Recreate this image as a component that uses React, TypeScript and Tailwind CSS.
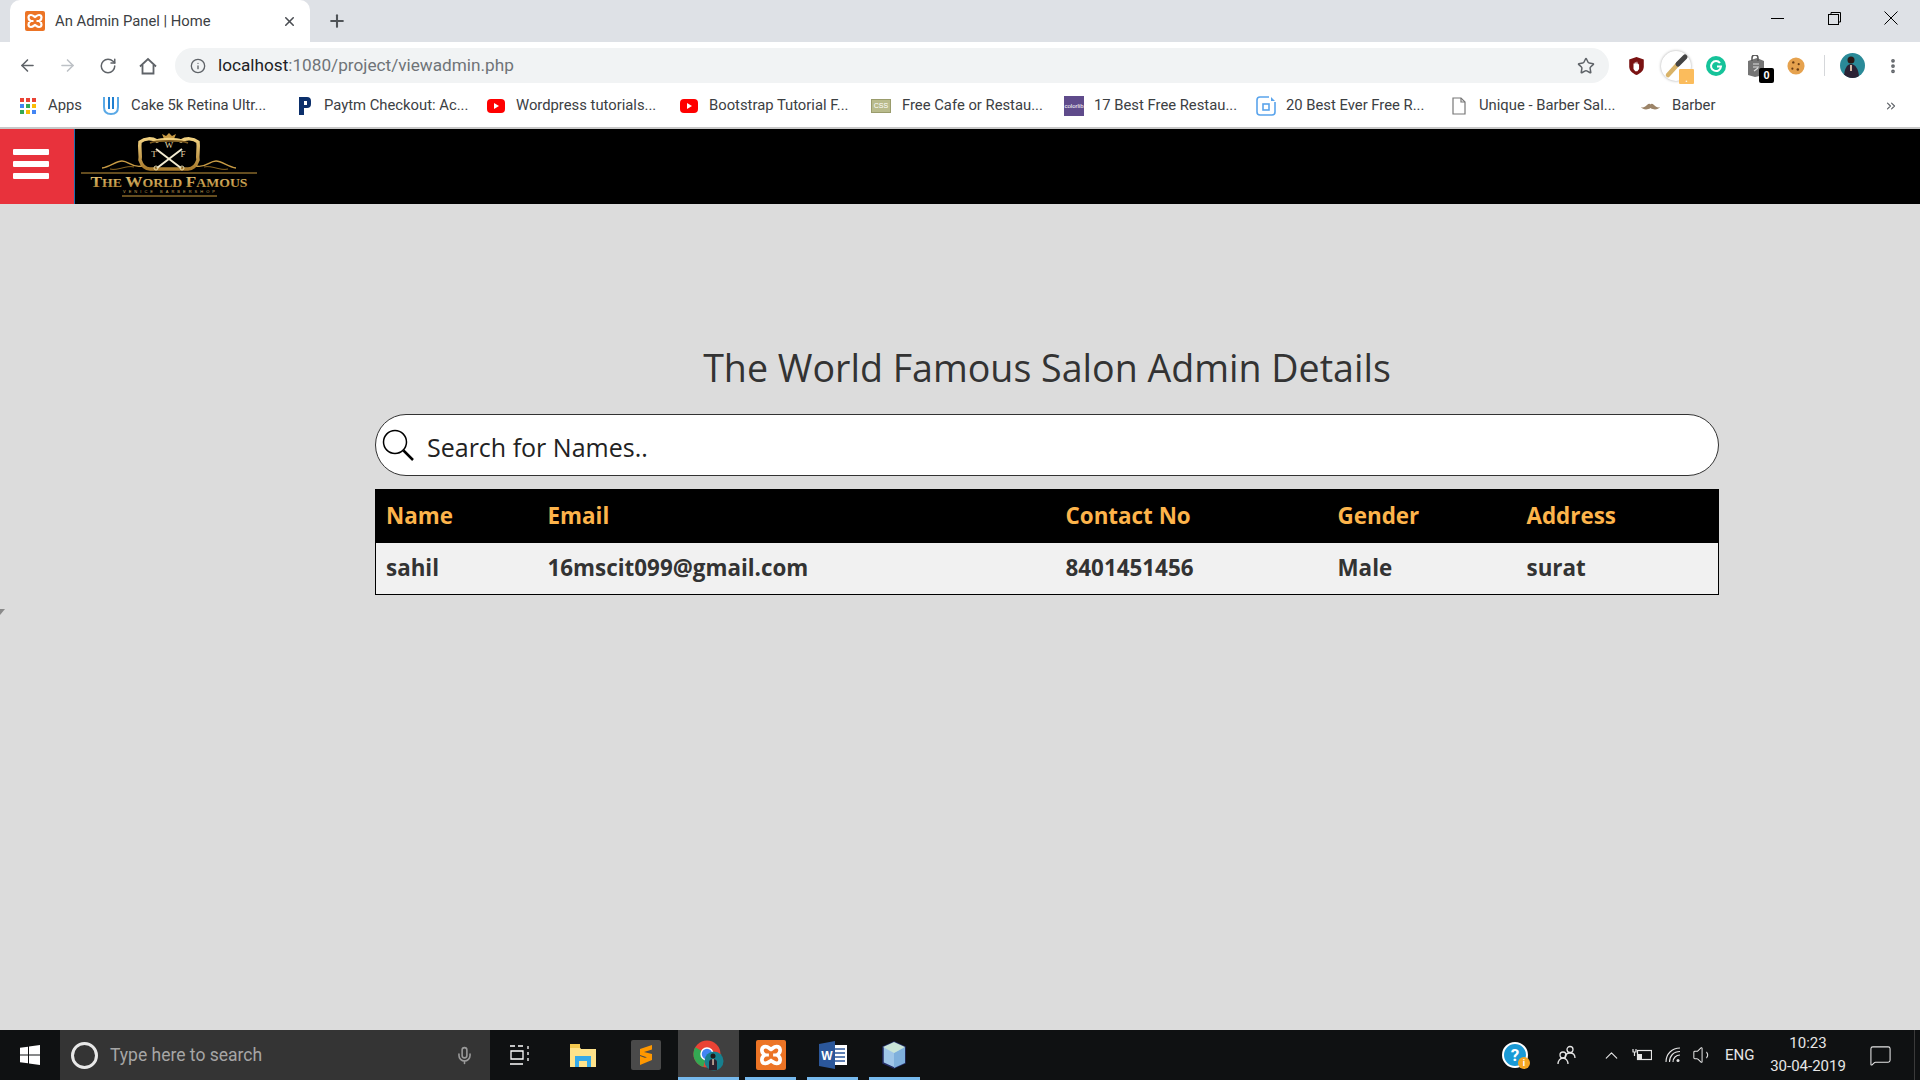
import { ArrowLeft, ArrowRight, RotateCw, Info, Star, Plus, X, MoreVertical, ChevronsRight, Mic, ChevronUp, Volume1, MessageSquare } from 'lucide-react';

const bookmarks = [
  { icon: 'cake', label: 'Cake 5k Retina Ultr...', box: 'w-[29px]', text: 'w-[167px]' },
  { icon: 'paytm', label: 'Paytm Checkout: Ac...', box: 'w-[26px]', text: 'w-[163px]' },
  { icon: 'yt', label: 'Wordpress tutorials...', box: 'w-[29px]', text: 'w-[164px]' },
  { icon: 'yt', label: 'Bootstrap Tutorial F...', box: 'w-[29px]', text: 'w-[162px]' },
  { icon: 'css', label: 'Free Cafe or Restau...', box: 'w-[31px]', text: 'w-[162px]' },
  { icon: 'colorlib', label: '17 Best Free Restau...', box: 'w-[30px]', text: 'w-[162px]' },
  { icon: 'doc', label: '20 Best Ever Free R...', box: 'w-[30px]', text: 'w-[166px]' },
  { icon: 'page', label: 'Unique - Barber Sal...', box: 'w-[27px]', text: 'w-[162px]' },
  { icon: 'barber', label: 'Barber', box: 'w-[31px]', text: 'w-[60px]' },
];

const XAMPP_PATH =
  'M6 4C8 4 9 5.500 10 6C11 5.500 12 4 14 4C17 4 17.500 8 14.500 10C17.500 12 17 16 14 16C12 16 11 14.500 10 14C9 14.500 8 16 6 16C3 16 2.500 12 5.500 10C2.500 8 3 4 6 4z';

function BookmarkIcon({ name }: { name: string }) {
  switch (name) {
    case 'cake':
      return (
        <svg width="18" height="20" viewBox="0 0 18 20">
          <path d="M2 1v10c0 4 2 7 7 7s7-3 7-7V1" fill="none" stroke="#5aa9e6" strokeWidth="2" />
          <path d="M7 1v12M11 1v12" stroke="#1f7fd0" strokeWidth="2" />
        </svg>
      );
    case 'paytm':
      return (
        <svg width="14" height="20" viewBox="0 0 14 20">
          <path d="M1 1h8a4 4 0 0 1 4 4v3a4 4 0 0 1-4 4H6v7H1z" fill="#0b2f6b" />
          <rect x="6" y="5" width="3" height="4" fill="#fff" />
        </svg>
      );
    case 'yt':
      return (
        <svg width="18" height="14" viewBox="0 0 18 14">
          <rect width="18" height="14" rx="4" fill="#f00" />
          <path d="M7 4l5 3-5 3z" fill="#fff" />
        </svg>
      );
    case 'css':
      return (
        <div className="w-5 h-[14px] bg-[#b9bb8c] border border-[#9a9c6c] flex items-center justify-center text-[7px] leading-none text-white font-['Liberation_Sans',sans-serif]">
          CSS
        </div>
      );
    case 'colorlib':
      return (
        <div className="w-5 h-5 bg-[#5f4b8b] flex items-center justify-center text-[6px] leading-none text-white font-['Liberation_Sans',sans-serif]">
          colorlib
        </div>
      );
    case 'doc':
      return (
        <svg width="20" height="20" viewBox="0 0 20 20">
          <path d="M13 1H4a3 3 0 0 0-3 3v12a3 3 0 0 0 3 3h12a3 3 0 0 0 3-3V6" fill="none" stroke="#5aa4ec" strokeWidth="1.600" />
          <path d="M15 1l4 4h-4z" fill="#5aa4ec" />
          <rect x="7" y="8" width="6" height="6" fill="none" stroke="#5aa4ec" strokeWidth="1.600" />
        </svg>
      );
    case 'page':
      return (
        <svg width="14" height="18" viewBox="0 0 14 18">
          <path d="M1 1h8l4 4v12H1z" fill="#fff" stroke="#777" strokeWidth="1.200" />
          <path d="M9 1v4h4" fill="none" stroke="#777" strokeWidth="1.200" />
        </svg>
      );
    case 'barber':
      return (
        <svg width="19" height="8" viewBox="0 0 19 8">
          <path d="M0 5c2 1 4 0 6-2 1.500-1.500 3-1.500 3.500-.5C10 1.500 11.500 1.500 13 3c2 2 4 3 6 2-1.500 2.500-6 3.500-9.500 1C6 8.500 1.500 7.500 0 5z" fill="#9c8468" />
        </svg>
      );
    default:
      return null;
  }
}

function AppsIcon() {
  const colors = ['#ea4335', '#ea4335', '#ea4335', '#4285f4', '#34a853', '#fbbc05', '#34a853', '#fbbc05', '#4285f4'];
  return (
    <div className="grid grid-cols-3 gap-[2px] w-4 h-4">
      {colors.map((c, i) => (
        <span key={i} className="w-[4px] h-[4px]" style={{ backgroundColor: c }} />
      ))}
    </div>
  );
}

function Xampp({ size }: { size: number }) {
  return (
    <svg width={size} height={size} viewBox="0 0 20 20">
      <rect width="20" height="20" rx="2" fill="#ec7425" />
      <path d={XAMPP_PATH} fill="none" stroke="#fff" strokeWidth="2.200" />
      <path d="M6 10h2.500M11.500 10H14" stroke="#fff" strokeWidth="1.800" />
    </svg>
  );
}

function Extensions() {
  return (
    <div className="flex items-center h-full ml-[7px]">
      {/* shield */}
      <div className="w-[40px] flex justify-center">
        <svg width="15" height="18" viewBox="0 0 17 21">
          <path d="M8.500 0L17 3v8c0 5-4 8-8.500 10C4 19 0 16 0 11V3z" fill="#7a1212" />
          <path d="M5 14V7.500h1.500V6h1v1.500h1V5.500h1v2h1v1h1V14l-2 2.500H7z" fill="#fff" />
        </svg>
      </div>
      {/* eyedropper */}
      <div className="w-[40px] flex justify-center relative">
        <div className="w-[30px] h-[30px] rounded-full bg-white shadow-[0_0_3px_rgba(0,0,0,0.35)] flex items-center justify-center">
          <svg width="30" height="30" viewBox="0 0 30 30">
            <path d="M7 24L17 13" stroke="#d9b368" strokeWidth="4.500" strokeLinecap="round" />
            <path d="M17 13L24 6" stroke="#444" strokeWidth="5" strokeLinecap="round" />
          </svg>
        </div>
        <div className="absolute left-[23px] top-[18px] w-[15px] h-[15px] bg-[#fbbc5c] rounded-[1px] flex items-end justify-center text-white text-[10px] leading-[12px]">.</div>
      </div>
      {/* grammarly */}
      <div className="w-[39px] flex justify-center">
        <div className="w-[20px] h-[20px] rounded-full bg-[#15c39a] flex items-center justify-center">
          <svg width="14" height="14" viewBox="0 0 14 14">
            <path d="M11 4a5 5 0 1 0 1 3.500H8" fill="none" stroke="#fff" strokeWidth="2" />
          </svg>
        </div>
      </div>
      {/* shopping bag with counter */}
      <div className="w-[39px] flex justify-center relative pl-[3px]">
        <svg width="18" height="22" viewBox="0 0 18 22">
          <path d="M1 6l9-3 7 3v14l-9 2-7-2z" fill="#757575" />
          <path d="M5 6V3a3 3 0 0 1 6 0v3" fill="none" stroke="#555" strokeWidth="1.500" />
          <path d="M6 9h6M6 12h6M7 16l4-3" stroke="#ddd" strokeWidth="1.200" />
        </svg>
        <div className="absolute left-[24px] top-[13px] w-[15px] h-[15px] bg-black rounded-[2px] text-white text-[11px] leading-[15px] text-center font-bold font-['Liberation_Sans',sans-serif]">0</div>
      </div>
      {/* cookie */}
      <div className="w-[42px] flex justify-center pl-[2px]">
        <svg width="18" height="18" viewBox="0 0 20 20">
          <circle cx="10" cy="10" r="9.500" fill="#e6a24e" />
          <circle cx="7" cy="6" r="1.300" fill="#6a3c12" />
          <circle cx="13" cy="8" r="1.200" fill="#6a3c12" />
          <circle cx="6" cy="13" r="1.200" fill="#6a3c12" />
          <circle cx="12" cy="14" r="1.400" fill="#6a3c12" />
        </svg>
      </div>
      <div className="w-px h-[21px] bg-[#d5d7da] mx-[8px]" />
      {/* profile picture */}
      <div className="ml-[7px] w-[25px] h-[25px] rounded-full overflow-hidden">
        <svg width="25" height="25" viewBox="0 0 25 25">
          <rect width="25" height="25" fill="#2a8a98" />
          <circle cx="11" cy="7" r="3.500" fill="#2a1a16" />
          <path d="M4 25c0-9 3-14 7-14s8 5 8 14z" fill="#2b2234" />
          <rect x="10" y="12" width="2" height="6" fill="#d8b9a5" />
        </svg>
      </div>
    </div>
  );
}

function ChromeBar() {
  return (
    <div className="flex flex-col">
      {/* tab strip */}
      <div className="h-[42px] bg-[#dee1e6] flex items-stretch pl-[10px]">
        <div className="w-[300px] bg-white rounded-t-[10px] flex items-center pl-[15px] pr-[13px]">
          <Xampp size={20} />
          <span className="ml-[10px] text-[14.800px] text-[#3c4043] font-['Roboto',sans-serif] flex-1 whitespace-nowrap">An Admin Panel | Home</span>
          <X className="w-[15px] h-[15px] text-[#4a4d52]" strokeWidth={2.5} />
        </div>
        <div className="ml-[17px] flex items-center">
          <Plus className="w-[20px] h-[20px] text-[#505458]" strokeWidth={2.5} />
        </div>
        <div className="ml-auto flex items-start">
          <div className="w-[57px] h-[36px] flex items-center justify-center">
            <div className="w-[13px] h-px bg-black" />
          </div>
          <div className="w-[57px] h-[36px] flex items-center justify-center">
            <svg width="13" height="13" viewBox="0 0 13 13">
              <rect x=".5" y="2.500" width="10" height="10" fill="none" stroke="#000" />
              <path d="M3 2.500V.5h9.500V10h-2" fill="none" stroke="#000" />
            </svg>
          </div>
          <div className="w-[57px] h-[36px] flex items-center justify-center pr-[2px]">
            <svg width="14" height="14" viewBox="0 0 14 14">
              <path d="M.5.5l13 13M13.500.5l-13 13" stroke="#000" />
            </svg>
          </div>
        </div>
      </div>
      {/* address row */}
      <div className="h-[47px] bg-white flex items-center pl-[18px]">
        <ArrowLeft className="w-[19px] h-[19px] text-[#5f6368]" strokeWidth={2} />
        <ArrowRight className="ml-[21px] w-[19px] h-[19px] text-[#bdc1c6]" strokeWidth={2} />
        <RotateCw className="ml-[22px] w-[18px] h-[18px] text-[#5f6368]" strokeWidth={2} />
        <svg className="ml-[22px]" width="18" height="18" viewBox="0 0 18 18" fill="none" stroke="#5f6368" strokeWidth="1.800">
          <path d="M1 9.500L9 2l8 7.500" />
          <path d="M3.500 8v8.500h11V8" />
        </svg>
        <div className="ml-[18px] w-[1434px] h-[35px] rounded-full bg-[#f1f3f4] flex items-center pl-[15px] pr-[14px]">
          <Info className="w-[16px] h-[16px] text-[#5f6368]" strokeWidth={2} />
          <span className="ml-[12px] text-[17.200px] font-['Roboto',sans-serif] text-[#202124] whitespace-nowrap">
            localhost<span className="text-[#6f7378]">:1080/project/viewadmin.php</span>
          </span>
          <Star className="ml-auto w-[18px] h-[18px] text-[#5f6368]" strokeWidth={2} />
        </div>
        <Extensions />
        <MoreVertical className="ml-[19px] w-[18px] h-[18px] text-[#5f6368]" strokeWidth={3} />
      </div>
      {/* bookmarks */}
      <div className="h-[38px] bg-white flex items-center pl-[20px] pb-[5px] text-[14.800px] text-[#3c4043] font-['Roboto',sans-serif]">
        <AppsIcon />
        <span className="ml-[12px] w-[54px]">Apps</span>
        {bookmarks.map((b) => (
          <div key={b.label} className="flex items-center">
            <div className={`${b.box} flex items-center`}>
              <BookmarkIcon name={b.icon} />
            </div>
            <span className={`${b.text} whitespace-nowrap`}>{b.label}</span>
          </div>
        ))}
        <ChevronsRight className="ml-[152px] w-[14px] h-[14px] text-[#5f6368]" strokeWidth={2} />
      </div>
      <div className="h-[2px] bg-[#c8c8c8]" />
    </div>
  );
}

function Logo() {
  return (
    <svg width="178" height="66" viewBox="0 0 178 66" className="ml-[5px] mb-[1px]">
      <defs>
        <linearGradient id="gold" x1="0" y1="0" x2="0" y2="1">
          <stop offset="0" stopColor="#f0d080" />
          <stop offset="1" stopColor="#a87a2c" />
        </linearGradient>
      </defs>
      {/* crown */}
      <path d="M84 6l-2-5 4 2 3-3 3 3 4-2-2 5z" fill="#c89b45" />
      {/* shield */}
      <path d="M60 9c5-4 12-4 17-1 4-2 20-2 24 0 5-3 12-3 17 1 1 7-1 13 0 18-2 6-6 9-10 9H70c-4 0-8-3-10-9 1-5-1-11 0-18z" fill="none" stroke="url(#gold)" strokeWidth="3.500" />
      <path d="M70 10c6-3 32-3 38 0" fill="none" stroke="#7d5a20" strokeWidth="1.500" />
      {/* scissors */}
      <path d="M77 35l25-19M101 35L76 16" stroke="#f2ead0" strokeWidth="2" />
      <circle cx="76" cy="35" r="2" fill="none" stroke="#e6d9a8" strokeWidth="1" />
      <circle cx="102" cy="35" r="2" fill="none" stroke="#e6d9a8" strokeWidth="1" />
      {/* swirls */}
      <path d="M22 35c8-1 14-7 20-7 7 0 9 7 20 5M156 35c-8-1-14-7-20-7-7 0-9 7-20 5" fill="none" stroke="#c89b45" strokeWidth="1.300" />
      <path d="M30 36c8 2 16-4 24-2M148 36c-8 2-16-4-24-2" fill="none" stroke="#8a6420" strokeWidth="1" />
      <path d="M1 40h176" stroke="#c8993f" strokeWidth="1" />
      <path d="M42 63h95" stroke="#c8993f" strokeWidth="1" />
      <text x="89" y="15" textAnchor="middle" fontFamily="'Liberation Serif', serif" fontSize="9" fill="#e6d9a8">W</text>
      <text x="74" y="24" textAnchor="middle" fontFamily="'Liberation Serif', serif" fontSize="9" fill="#e6d9a8">T</text>
      <text x="103" y="24" textAnchor="middle" fontFamily="'Liberation Serif', serif" fontSize="9" fill="#e6d9a8">F</text>
      <text x="89" y="54" textAnchor="middle" fontFamily="'Liberation Serif', serif" fontWeight="700" fill="url(#gold)" fontSize="15" textLength="157" lengthAdjust="spacingAndGlyphs">
        T<tspan fontSize="12">HE </tspan>W<tspan fontSize="12">ORLD </tspan>F<tspan fontSize="12">AMOUS</tspan>
      </text>
      <text x="89" y="60" textAnchor="middle" fontFamily="'Liberation Sans', sans-serif" fontSize="4" fill="#c8a458" textLength="92">VENICE BARBERSHOP</text>
    </svg>
  );
}

function Navbar() {
  return (
    <div className="h-[75px] bg-black flex items-center">
      <div className="w-[75px] h-full bg-[#e8323c] border-r border-[#1c6fb0] flex flex-col items-start justify-center gap-[6px] pl-[13px] pb-[5px]">
        <div className="w-[36px] h-[6px] bg-white rounded-[1px]" />
        <div className="w-[36px] h-[6px] bg-white rounded-[1px]" />
        <div className="w-[36px] h-[6px] bg-white rounded-[1px]" />
      </div>
      <Logo />
    </div>
  );
}

function AdminPanel() {
  return (
    <div className="relative flex-1 bg-[#dcdcdc] pl-[375px] pr-[201px] pt-[138px] font-['Open_Sans',sans-serif]">
      <svg className="absolute left-0 top-[405px]" width="6" height="7" viewBox="0 0 6 7">
        <path d="M0 0h5L0 6z" fill="#8a8a8a" />
      </svg>
      <h1 className="text-[37.600px] leading-[52px] font-normal text-[#333] text-center">The World Famous Salon Admin Details</h1>
      <div className="mt-[20px] h-[62px] bg-white border border-[#333] rounded-[31px] flex items-center pl-[6px]">
        <svg width="33" height="33" viewBox="0 0 33 33">
          <circle cx="13" cy="13" r="11.500" fill="none" stroke="#000" strokeWidth="1.500" />
          <path d="M21.500 21.500L31 31" stroke="#000" strokeWidth="2.500" />
        </svg>
        <span className="ml-[12px] mt-[6px] text-[25px] text-[#222]">Search for Names..</span>
      </div>
      <table className="mt-[13px] w-full table-fixed border-collapse border border-black text-[22.400px] font-bold">
        <colgroup>
          <col className="w-[161px]" />
          <col className="w-[518px]" />
          <col className="w-[272px]" />
          <col className="w-[189px]" />
          <col />
        </colgroup>
        <thead>
          <tr className="bg-black text-[#fdb44b] h-[53px]">
            <th className="text-left font-bold pl-[10px]">Name</th>
            <th className="text-left font-bold pl-[11px]">Email</th>
            <th className="text-left font-bold pl-[11px]">Contact No</th>
            <th className="text-left font-bold pl-[11px]">Gender</th>
            <th className="text-left font-bold pl-[11px]">Address</th>
          </tr>
        </thead>
        <tbody>
          <tr className="bg-[#f1f1f1] text-[#333] h-[52px]">
            <td className="pl-[10px]">sahil</td>
            <td className="pl-[11px]">16mscit099@gmail.com</td>
            <td className="pl-[11px]">8401451456</td>
            <td className="pl-[11px]">Male</td>
            <td className="pl-[11px]">surat</td>
          </tr>
        </tbody>
      </table>
    </div>
  );
}

function TaskIcon({ children, active, running }: { children: React.ReactNode; active?: boolean; running?: boolean }) {
  return (
    <div className={`h-full flex items-center justify-center relative ${active ? 'w-[61px] bg-[#404040]' : 'w-[51px]'}`}>
      {children}
      {running && <div className="absolute left-0 right-0 bottom-0 h-[3px] bg-[#76b9ed]" />}
    </div>
  );
}

function Taskbar() {
  return (
    <div className="h-[50px] bg-[#0f1112] flex items-stretch relative">
      <div className="w-[60px] flex items-center justify-center">
        <svg width="20" height="20" viewBox="0 0 20 20" fill="#fff">
          <path d="M0 2.800l8-1.100V9.500H0zM9 1.500L20 0v9.500H9zM0 10.500h8v7.800l-8-1.100zM9 10.500h11V20L9 18.500z" />
        </svg>
      </div>
      <div className="w-[430px] bg-[#343434] flex items-center pl-[11px] font-['Roboto',sans-serif]">
        <div className="w-[27px] h-[27px] rounded-full border-[3px] border-[#e8e8e8]" />
        <span className="ml-[12px] text-[17.500px] text-[#a6a6a6]">Type here to search</span>
        <Mic className="ml-auto mr-[16px] w-[19px] h-[19px] text-[#9a9a9a]" strokeWidth={2} />
      </div>
      <div className="w-[58px] pl-[1px] flex items-center justify-center">
        <svg width="20" height="20" viewBox="0 0 20 20" fill="none" stroke="#fff" strokeWidth="1.300">
          <path d="M0 1h5M8 1h5M0 19h13M1 6h12v8H1zM18 1v3M18 7v3M18 13v3" />
        </svg>
      </div>
      <div className="ml-[4px] w-[62px] flex items-center justify-center">
        <svg width="28" height="24" viewBox="0 0 28 24">
          <path d="M1 3h9l2 3h15v18H1z" fill="#fde28a" />
          <rect x="1" y="1" width="10" height="4" fill="#f3c84e" />
          <path d="M6 13h16v11h-4v-6h-8v6H6z" fill="#35a9e8" />
        </svg>
      </div>
      <div className="w-[64px] flex items-center justify-center">
        <div className="w-[30px] h-[30px] rounded-[2px] bg-[#4a4a4a] flex items-center justify-center">
          <svg width="16" height="22" viewBox="0 0 16 22">
            <path d="M14 1L2 5v6l12 4v-5L6 8l8-2.500zM2 12l8 3-8 2.500z" fill="#ff9800" />
            <path d="M14 11v5L2 21v-5z" fill="#ff9800" />
          </svg>
        </div>
      </div>
      <TaskIcon active running>
        <svg width="31" height="31" viewBox="0 0 31 31">
          <circle cx="14" cy="14" r="13.500" fill="#ea4335" />
          <path d="M14 14L2.300 7.200a13.500 13.500 0 0 0 8 19.800z" fill="#34a853" />
          <path d="M14 14h13.500a13.500 13.500 0 0 1-4 9.500z" fill="#fbbc05" />
          <circle cx="14" cy="14" r="6" fill="#4285f4" stroke="#fff" strokeWidth="1.500" />
          <circle cx="21" cy="21" r="9.500" fill="#17808f" />
          <circle cx="20" cy="16" r="2.500" fill="#1f1a1a" />
          <path d="M16 30V22c0-2 2-3 4-3s4 1 4 3v8z" fill="#2a2230" />
          <rect x="19.300" y="19" width="1.500" height="6" fill="#d8b9a5" />
        </svg>
      </TaskIcon>
      <div className="w-[6px]" />
      <TaskIcon running>
        <div className="w-[30px] h-[30px] rounded-[2px] bg-[#ec7425] flex items-center justify-center">
          <svg width="28" height="28" viewBox="0 0 20 20">
            <path d={XAMPP_PATH} fill="none" stroke="#fff" strokeWidth="2.600" />
            <path d="M6 10h2.500M11.500 10H14" stroke="#fff" strokeWidth="2" />
          </svg>
        </div>
      </TaskIcon>
      <div className="w-[11px]" />
      <TaskIcon running>
        <svg width="29" height="28" viewBox="0 0 29 28">
          <rect x="13" y="4" width="16" height="20" fill="#fff" />
          <path d="M16 8h11M16 12h11M16 16h11M16 20h11" stroke="#2b579a" strokeWidth="1.500" />
          <path d="M1 3l16-3v28L1 25z" fill="#2b579a" />
          <text x="9" y="19" textAnchor="middle" fontSize="12" fontWeight="700" fill="#fff" fontFamily="'Liberation Sans', sans-serif">W</text>
        </svg>
      </TaskIcon>
      <div className="w-[11px]" />
      <TaskIcon running>
        <svg className="mr-[2px]" width="28" height="28" viewBox="0 0 28 28">
          <path d="M14 1l11 5v16l-11 5-11-5V6z" fill="#9fc6e8" stroke="#232c66" strokeWidth="1.500" />
          <path d="M14 12l11-6v16l-11 5z" fill="#7fb0dc" />
          <path d="M3 6l11-5 11 5-11 6z" fill="#c9e4d8" />
        </svg>
      </TaskIcon>

      {/* tray */}
      <div className="ml-auto flex items-center text-[#e6e6e6] font-['Roboto',sans-serif]">
        <div className="relative w-[26px] h-[26px] rounded-full bg-[#1a9ad6] border-2 border-white flex items-center justify-center text-white font-bold text-[17px] leading-none">
          ?
          <div className="absolute -right-[4px] -bottom-[3px] w-[12px] h-[12px] rounded-full bg-[#f5a623] text-white text-[9px] leading-[12px] text-center">i</div>
        </div>
        <svg className="ml-[29px]" width="20" height="20" viewBox="0 0 20 20" fill="none" stroke="#e6e6e6" strokeWidth="1.300">
          <circle cx="13" cy="4.500" r="3" />
          <path d="M8 13c0-3 2-5 5-5s5 2 5 5" />
          <circle cx="6" cy="10" r="3" />
          <path d="M1 19c0-3 2-6 5-6s5 3 5 6" />
        </svg>
        <ChevronUp className="ml-[24px] w-[21px] h-[21px]" strokeWidth={1.300} />
        <svg className="ml-[10px]" width="20" height="14" viewBox="0 0 20 14" fill="none" stroke="#e6e6e6" strokeWidth="1.200">
          <rect x="5.500" y="2.500" width="14" height="9" />
          <rect x="6" y="6" width="4" height="5" fill="#e6e6e6" stroke="none" />
          <path d="M1 1v3M4 1v3M.5 4h4M2.500 4v4" />
        </svg>
        <svg className="ml-[13px]" width="16" height="16" viewBox="0 0 16 16" fill="none" stroke="#e6e6e6" strokeWidth="1.100">
          <path d="M1 15C1 7 7 1 15 1M4.500 15c0-6 4-10.500 10.500-10.500M8 15c0-4 3-7 7-7" />
          <circle cx="13" cy="13.500" r="1.500" fill="#e6e6e6" stroke="none" />
        </svg>
        <Volume1 className="ml-[11px] w-[22px] h-[22px]" strokeWidth={1.100} />
        <span className="ml-[11px] text-[15px] w-[30px]">ENG</span>
        <div className="ml-[15px] w-[76px] text-center text-[15px] leading-[23px]">
          <div>10:23</div>
          <div>30-04-2019</div>
        </div>
        <MessageSquare className="ml-[23px] w-[23px] h-[23px]" strokeWidth={1.100} />
        <div className="ml-[22px] w-px h-full bg-[#3a3a3a]" />
        <div className="w-[5px]" />
      </div>
    </div>
  );
}

export default function App() {
  return (
    <div className="w-[1920px] h-[1080px] flex flex-col overflow-hidden">
      <ChromeBar />
      <Navbar />
      <AdminPanel />
      <Taskbar />
    </div>
  );
}
